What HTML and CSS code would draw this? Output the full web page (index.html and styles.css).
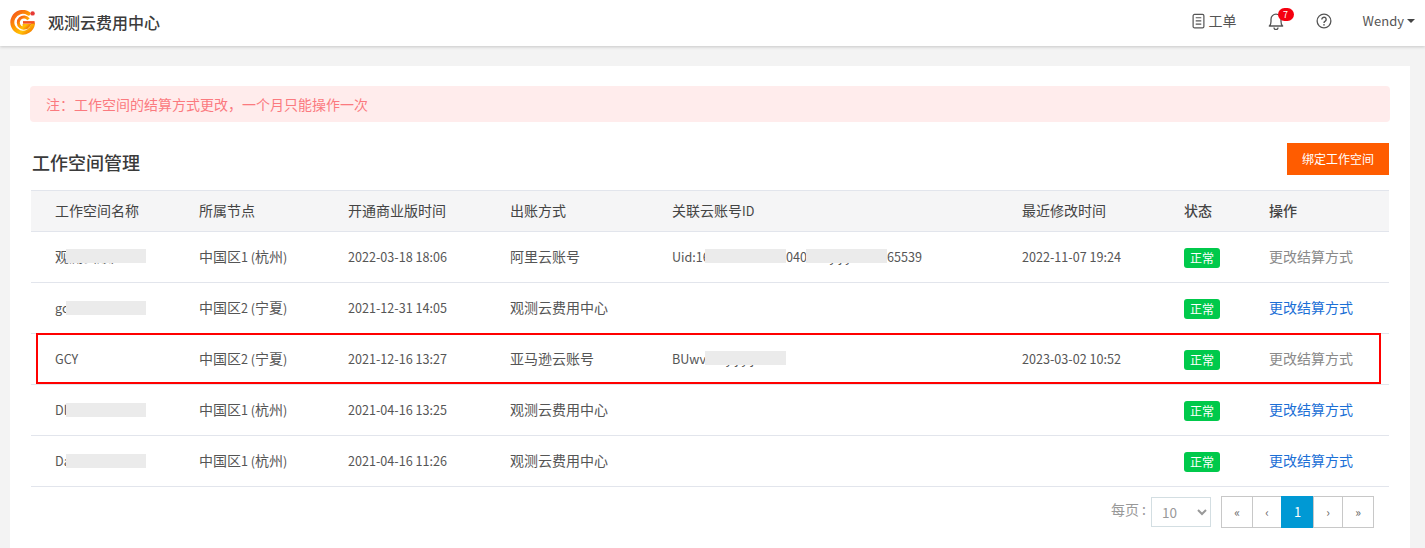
FILE: index.html
```html
<!DOCTYPE html>
<html lang="zh-CN">
<head>
<meta charset="utf-8">
<title>观测云费用中心</title>
<link rel="stylesheet" href="styles.css">
</head>
<body>
<header class="topbar">
  <div class="brand">
    <svg class="logo" viewBox="0 0 26 26" width="26" height="26" aria-hidden="true">
      <defs>
        <linearGradient id="lg" x1="0" y1="0" x2="0.9" y2="1">
          <stop offset="0" stop-color="#f4511e"/>
          <stop offset="0.45" stop-color="#ff9800"/>
          <stop offset="0.75" stop-color="#ffc107"/>
          <stop offset="1" stop-color="#f57c00"/>
        </linearGradient>
      </defs>
      <path d="M18.5 3.6A10.4 10.4 0 1 0 23 14" fill="none" stroke="url(#lg)" stroke-width="4" stroke-linecap="round"/>
      <path d="M18.5 9.3A5.6 5.6 0 1 0 18.6 15.6H12.6" fill="none" stroke="url(#lg)" stroke-width="3"/>
      <path d="M13 12.4H24.6" fill="none" stroke="#f4511e" stroke-width="2.6"/>
      <circle cx="22.6" cy="3.4" r="2.2" fill="#e53935"/>
    </svg>
    <span class="brand-name">观测云费用中心</span>
  </div>
  <nav class="tools">
    <a class="tool tool-ticket">
      <svg viewBox="0 0 14 17" width="13" height="16" fill="none" stroke="#555" stroke-width="1.3" aria-hidden="true">
        <rect x="1.2" y="1.4" width="11.6" height="14.4" rx="1.5"/>
        <path d="M4 5H10M4 8.4H10M4 11.8H10"/>
      </svg>
      <span class="tool-text">工单</span>
    </a>
    <a class="tool tool-bell">
      <svg viewBox="0 0 16 18" width="16" height="18" fill="none" stroke="#555" stroke-width="1.3" aria-hidden="true">
        <path d="M1.3 14C2.8 13 3 11.5 3 9.5V7.2A5 5 0 0 1 13 7.2V9.5C13 11.5 13.2 13 14.7 14Z" stroke-linejoin="round"/>
        <path d="M6 15.6A2 2 0 0 0 10 15.6"/>
      </svg>
      <span class="badge">7</span>
    </a>
    <a class="tool tool-help">
      <svg viewBox="0 0 17 17" width="16" height="16" fill="none" stroke="#555" stroke-width="1.4" aria-hidden="true">
        <circle cx="8.5" cy="8.5" r="7.3"/>
        <path d="M6.2 6.8A2.3 2.3 0 1 1 9.8 8.7C8.9 9.2 8.5 9.6 8.5 10.6" stroke-width="1.5"/>
        <circle cx="8.5" cy="12.6" r="0.9" fill="#555" stroke="none"/>
      </svg>
    </a>
    <a class="tool tool-user"><span class="tool-text">Wendy</span><span class="caret"></span></a>
  </nav>
</header>

<main class="panel">
  <div class="alert">注：工作空间的结算方式更改，一个月只能操作一次</div>
  <div class="title-row">
    <h1 class="title">工作空间管理</h1>
    <button class="bind-btn">绑定工作空间</button>
  </div>

  <table class="grid">
    <colgroup>
      <col class="c1"><col class="c2"><col class="c3"><col class="c4"><col class="c5"><col class="c6"><col class="c7"><col class="c8">
    </colgroup>
    <thead>
      <tr>
        <th>工作空间名称</th><th>所属节点</th><th>开通商业版时间</th><th>出账方式</th><th>关联云账号<span class="lat">ID</span></th><th>最近修改时间</th><th>状态</th><th>操作</th>
      </tr>
    </thead>
    <tbody>
      <tr>
        <td><span class="masked">观测云账户<i class="mask mask-name"></i></span></td>
        <td>中国区<span class="lat">1 (</span>杭州<span class="lat">)</span></td><td class="num">2022-03-18 18:06</td><td>阿里云账号</td>
        <td class="num"><span class="masked"><span class="seg seg-a">Uid:16</span><span class="seg seg-b">040        y j y</span><span class="seg">65539</span><i class="mask mask-id1"></i><i class="mask mask-id2"></i></span></td>
        <td class="num">2022-11-07 19:24</td><td><span class="tag">正常</span></td><td><a class="op off">更改结算方式</a></td>
      </tr>
      <tr>
        <td><span class="masked lat">gc<i class="mask mask-name"></i></span></td>
        <td>中国区<span class="lat">2 (</span>宁夏<span class="lat">)</span></td><td class="num">2021-12-31 14:05</td><td>观测云费用中心</td>
        <td></td><td></td><td><span class="tag">正常</span></td><td><a class="op">更改结算方式</a></td>
      </tr>
      <tr>
        <td class="num">GCY</td>
        <td>中国区<span class="lat">2 (</span>宁夏<span class="lat">)</span></td><td class="num">2021-12-16 13:27</td><td>亚马逊云账号</td>
        <td class="num"><span class="masked">BUwv       y j y j<i class="mask mask-id1"></i></span></td>
        <td class="num">2023-03-02 10:52</td><td><span class="tag">正常</span></td><td><a class="op off">更改结算方式</a></td>
      </tr>
      <tr>
        <td><span class="masked lat">Dl<i class="mask mask-name"></i></span></td>
        <td>中国区<span class="lat">1 (</span>杭州<span class="lat">)</span></td><td class="num">2021-04-16 13:25</td><td>观测云费用中心</td>
        <td></td><td></td><td><span class="tag">正常</span></td><td><a class="op">更改结算方式</a></td>
      </tr>
      <tr>
        <td><span class="masked lat">Da<i class="mask mask-name"></i></span></td>
        <td>中国区<span class="lat">1 (</span>杭州<span class="lat">)</span></td><td class="num">2021-04-16 11:26</td><td>观测云费用中心</td>
        <td></td><td></td><td><span class="tag">正常</span></td><td><a class="op">更改结算方式</a></td>
      </tr>
    </tbody>
  </table>

  <div class="pager-row">
    <span class="per">每页 :</span>
    <select class="per-select"><option>10</option><option>20</option><option>50</option></select>
    <ul class="pager">
      <li class="p-edge">«</li><li class="p-step">‹</li><li class="p-cur">1</li><li class="p-step">›</li><li class="p-edge">»</li>
    </ul>
  </div>
  <div class="highlight"></div>
</main>
</body>
</html>
```
FILE: styles.css
```css
* { box-sizing: border-box; }
html, body { margin: 0; height: 100%; }
body {
  background: #f3f3f3;
  font-family: "Noto Sans CJK SC", "Noto Sans", sans-serif;
  color: #444;
  font-size: 14px;
  overflow: hidden;
}
.topbar {
  height: 46px;
  background: #fff;
  box-shadow: 0 1px 3px rgba(0, 0, 0, .18);
  display: flex;
  align-items: center;
  justify-content: space-between;
  padding: 0 10px;
}
.brand { display: flex; align-items: center; }
.logo { margin-right: 12px; }
.brand-name { font-size: 16px; font-weight: 500; color: #3c3c3c; padding-bottom: 2px; }
.tools { display: flex; align-items: center; padding-bottom: 4px; }
.tool { display: flex; align-items: center; color: #555; font-size: 14px; }
.tool-text { padding-bottom: 2px; }
.tool-ticket { gap: 4px; margin-right: 31px; }
.tool-bell { position: relative; margin-right: 32px; }
.badge {
  position: absolute;
  left: 10px;
  top: -4px;
  width: 16px;
  height: 13px;
  border-radius: 7px;
  background: #f5000f;
  color: #fff;
  font-size: 9px;
  line-height: 13px;
  text-align: center;
}
.tool-help { margin-right: 31px; }
.tool-user { font-size: 13px; }
.caret {
  margin-left: 3px;
  border-left: 4px solid transparent;
  border-right: 4px solid transparent;
  border-top: 4px solid #444;
}
.panel {
  position: relative;
  margin: 20px 15px 0 10px;
  height: 482px;
  background: #fff;
  padding: 20px 20px 0;
}
.alert {
  height: 36px;
  line-height: 36px;
  padding-left: 16px;
  background: #ffecec;
  border-radius: 4px;
  color: #fb7a7f;
  font-size: 14px;
}
.title-row {
  display: flex;
  justify-content: space-between;
  align-items: center;
  margin: 21px 1px 15px 1px;
  height: 32px;
}
.title { margin: 5px 0 0; font-size: 18px; line-height: 32px; font-weight: 500; color: #3a3a3a; padding-left: 1px; }
.bind-btn {
  width: 102px;
  height: 32px;
  padding: 0 0 2px;
  border: 0;
  background: #ff5c00;
  color: #fff;
  font: 12px "Noto Sans CJK SC", sans-serif;
}
.grid {
  width: 1358px;
  margin-left: 1px;
  border-collapse: collapse;
  table-layout: fixed;
}
.c1 { width: 144px; } .c2 { width: 149px; } .c3 { width: 162px; } .c4 { width: 162px; }
.c5 { width: 350px; } .c6 { width: 162px; } .c7 { width: 85px; } .c8 { width: 144px; }
.grid th, .grid td { padding: 0 0 2px 24px; text-align: left; white-space: pre; overflow: visible; line-height: 20px; }
.grid th {
  height: 41px;
  background: #f5f5f6;
  border-top: 1px solid #e2e5ec;
  border-bottom: 1px solid #e2e5ec;
  font-weight: 400;
  color: #444;
}
.grid th:nth-child(n+7) { font-weight: 500; }
.grid td { height: 51px; border-bottom: 1px solid #e2e5ec; color: #555; font-size: 14px; }
.grid td.num, .lat { font-size: 12.6px; }
.grid td.num { padding-bottom: 0; }
.grid td:nth-child(7) { padding: 2px 0 0 24px; }
.masked { position: relative; display: inline-block; }
.seg { display: inline-block; }
.seg-a { width: 114px; }
.seg-b { width: 101px; }
.mask { position: absolute; top: 3px; height: 14px; background: #ebebeb; }
.grid td.num .mask { top: 2px; }
.mask-name { left: 11px; width: 80px; }
.mask-id1 { left: 33px; width: 81px; }
.mask-id2 { left: 134px; width: 81px; }
.tag {
  display: inline-block;
  width: 36px;
  height: 20px;
  line-height: 20px;
  text-align: center;
  vertical-align: top;
  background: #00c94b;
  border-radius: 3px;
  color: #fff;
  font-size: 12px;
}
.op { color: #1b6fd6; }
.op.off { color: #8a8a8a; }
.pager-row {
  display: flex;
  align-items: center;
  justify-content: flex-end;
  margin: 9px 16px 0 0;
}
.per { color: #999; font-size: 14px; margin-right: 5px; padding-bottom: 6px; }
.per-select {
  width: 60px;
  height: 30px;
  margin-right: 11px;
  background: #fff;
  border: 1px solid #d3dee2;
  color: #999;
  font: 13.5px "Noto Sans CJK SC", sans-serif;
  padding-left: 6px;
}
.pager { display: flex; margin: 0; padding: 0; list-style: none; height: 32px; }
.pager li {
  line-height: 30px;
  text-align: center;
  border: 1px solid #c8c8c8;
  margin-left: -1px;
  color: #666;
  font-size: 12px;
}
.p-edge { width: 32px; }
.p-step { width: 30px; }
.pager .p-cur { width: 33px; background: #0099d4; border-color: #0099d4; color: #fff; font-size: 13px; }
.highlight {
  position: absolute;
  left: 26px;
  top: 267px;
  width: 1345px;
  height: 51px;
  border: 2px solid #f00;
  pointer-events: none;
}
```
